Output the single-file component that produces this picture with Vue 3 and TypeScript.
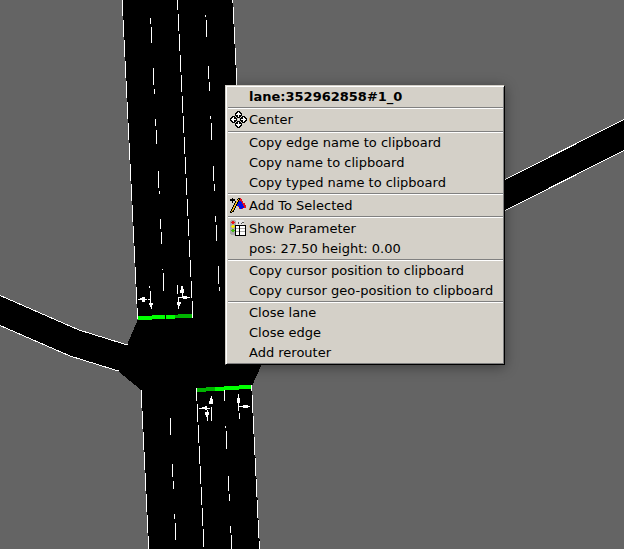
<script setup lang="ts">
type Dash = [x: number, y: number, length: number]
type IconName = 'center' | 'select' | 'parameter'
interface Item { label: string; icon?: IconName }

// A near-vertical marking drifts one pixel to the right with every dash.
function edge(x: number, y: number, period: number, count: number, length: number): Dash[] {
  return Array.from({ length: count }, (_, i): Dash => [x + i, Math.round(y + i * period), length])
}

const markings: Dash[] = [
  ...edge(122, -1, 20.6, 15, 17),
  [137, 308, 11],
  ...edge(177, -7, 20.55, 16, 17),
  ...edge(232, -14, 20.5, 6, 17),
  ...edge(141, 390, 20.8, 8, 18),
  [196, 388, 13],
  ...edge(197, 404, 20.8, 7, 18),
  [251, 385, 6],
  ...edge(252, 395, 20.9, 8, 18),
  [150, 18, 6], [151, 27, 16], [153, 68, 17], [154, 89, 5], [155, 119, 7], [156, 130, 14],
  [158, 171, 17], [159, 191, 3], [160, 219, 10], [161, 232, 12], [162, 269, 1], [163, 273, 18],
  [205, 15, 2], [206, 20, 17], [208, 66, 13], [209, 82, 9], [210, 116, 3], [211, 123, 17],
  [213, 166, 15], [214, 184, 7], [215, 216, 6], [216, 225, 16], [218, 266, 18], [219, 287, 4],
  [170, 418, 17], [172, 464, 13], [173, 481, 8], [174, 514, 5], [175, 523, 17],
  [224, 389, 12], [225, 426, 2], [226, 431, 18], [228, 476, 15], [229, 494, 7],
  [230, 526, 7], [231, 535, 14], [239, 413, 6], [211, 407, 14],
]

const title = 'lane:352962858#1_0'
const groups: Item[][] = [
  [{ label: 'Center', icon: 'center' }],
  [
    { label: 'Copy edge name to clipboard' },
    { label: 'Copy name to clipboard' },
    { label: 'Copy typed name to clipboard' },
  ],
  [{ label: 'Add To Selected', icon: 'select' }],
  [{ label: 'Show Parameter', icon: 'parameter' }, { label: 'pos: 27.50 height: 0.00' }],
  [
    { label: 'Copy cursor position to clipboard' },
    { label: 'Copy cursor geo-position to clipboard' },
  ],
  [{ label: 'Close lane' }, { label: 'Close edge' }, { label: 'Add rerouter' }],
]
</script>

<template>
  <main class="view">
    <svg class="network" viewBox="0 0 624 549" preserveAspectRatio="xMinYMin slice" shape-rendering="crispEdges" aria-hidden="true">
      <path class="asphalt" d="M122 0H233L238 120L400 230L505 180L624 119V151L505 211L300 300L262 364L252 386L260 549H149L141 390L118 371L70 356L0 325V295L79 330L127 345L138 319Z" />
      <path class="border" d="M0 295.500L79 330L127.500 345M0 325.500L70 356L118.500 371M505 179.500L624 119.500M505 210.500L624 150.500" />

      <rect v-for="([x, y, length], i) in markings" :key="i" class="mark" :x="x" :y="y" width="1" :height="length" />

      <g class="go">
        <path d="M138 316H152V315H165V319H152V320H138ZM166 315H175V319H166ZM215 387H224V386H239V385H251V389H239V390H224V391H215Z" />
      </g>
      <g class="yield">
        <path d="M175 315H178V314H192V318H175ZM197 388H206V387H215V391H206V392H197Z" />
      </g>

      <g class="mark">
        <path d="M138 299H140V298H142V297H145V302H142V300H138ZM144 299H147V300H144ZM148 299H150V300H148ZM150 291H151V304H150ZM149 286H150V288H149ZM149 303H153V305H152V309H151V307H150V305H149Z" />
        <path d="M177 285H178V294H177ZM181 286H183V289H184V293H180V290H181ZM182 292H183V298H182ZM178 297H190V298H178ZM183 296H187V299H183ZM178 297H179V303H178ZM177 302H181V304H180V306H179V309H178V305H177Z" />
        <path d="M211 396H212V399H213V404H209V401H210V398H211ZM199 408H210V409H199ZM202 407H205V406H207V410H205V409H202ZM207 410H208V421H207ZM205 412H209V415H208V417H206V415H205Z" />
        <path d="M238 394H239V398H240V403H237V398H238ZM238 402H239V411H238ZM238 406H250V407H238ZM243 405H248V408H243Z" />
      </g>
    </svg>

    <section class="menu" :aria-label="title">
      <h1 class="title">{{ title }}</h1>
      <div v-for="(group, g) in groups" :key="g" class="group">
        <button v-for="item in group" :key="item.label" class="item" type="button">
          <span class="slot">
            <svg v-if="item.icon === 'center'" width="17" height="17" viewBox="0 0 17 17" shape-rendering="crispEdges" aria-hidden="true">
              <g v-for="turn in [0, 90, 180, 270]" :key="turn" :transform="`rotate(${turn} 8.5 8.5)`">
                <path d="M7 0H10V1H11V2H12V5H11V6H10V7H7V6H6V5H5V2H6V1H7Z" />
                <path fill="#fff" d="M8 1H9V2H10V3H11V4H9V6H8V4H6V3H7V2H8Z" />
              </g>
              <path fill="#fff" d="M8 8H9V9H8Z" />
            </svg>
            <svg v-else-if="item.icon === 'select'" width="16" height="16" viewBox="0 0 16 16" shape-rendering="crispEdges" aria-hidden="true">
              <path fill="#e01020" d="M9 1H11V2H12V4H13V6H15V8H16V11H13V12H9V10H8V2H9Z" />
              <path fill="#0010e8" d="M8 4H11V5H12V7H13V9H14V11H12V12H10V11H9V9H7V6H8Z" />
              <path d="M2 1H3V2H5V4H3V6H2V4H0V2H2Z" />
              <path d="M8 1H10V3H9V5H8V7H7V9H6V11H5V13H4V15H2V16H0V14H1V12H2V10H3V8H4V6H5V4H7V2H8Z" />
              <path fill="#f4b820" d="M8 2H9V3H8V5H7V7H6V9H5V11H4V13H3V14H2V15H1V14H2V12H3V10H4V8H5V6H6V4H7V3H8Z" />
            </svg>
            <svg v-else-if="item.icon === 'parameter'" width="16" height="16" viewBox="0 0 16 16" shape-rendering="crispEdges" aria-hidden="true">
              <path fill="#aaa" d="M1 0H5V1H6V14H5V15H1V14H0V1H1Z" />
              <path fill="#e4e4e4" d="M6 0H14V5H6Z" />
              <path fill="#555" d="M8 2H9V4H8ZM11 3H12V2H14V3H12V4H11Z" />
              <path fill="#e41818" d="M2 1H4V2H5V3H4V4H2V3H1V2H2Z" />
              <path fill="#f3e600" d="M2 5H4V6H5V7H4V8H2V7H1V6H2Z" />
              <path fill="#45bd10" d="M2 9H4V10H5V11H4V12H2V11H1V10H2Z" />
              <path d="M5 5H16V16H5Z" />
              <path fill="#fff" d="M6 6H9V15H6ZM10 6H15V15H10Z" />
              <path fill="#aaa" d="M6 8H9V9H6ZM10 8H15V9H10ZM6 11H9V12H6ZM10 11H15V12H10Z" />
            </svg>
          </span>
          <span>{{ item.label }}</span>
        </button>
      </div>
    </section>
  </main>
</template>

<style>
body {
  margin: 0;
  background: #646464;
}
</style>

<style scoped>
.view {
  position: relative;
  min-height: 100vh;
  overflow: hidden;
  background: #646464;
  font: 13px/15px "DejaVu Sans", sans-serif;
  color: #000;
}

.network {
  display: block;
  width: 100%;
  height: 100vh;
}

.asphalt { fill: #000; }
.border { fill: none; stroke: #fff; }
.mark { fill: #fff; }
.go { fill: #00ff00; }
.yield { fill: #00b300; }

.menu {
  position: absolute;
  top: 85px;
  left: 225px;
  box-sizing: border-box;
  width: 280px;
  padding: 1px;
  border: 1px solid;
  border-color: #d4d0c8 #000 #000 #d4d0c8;
  background: #d4d0c8;
  box-shadow: inset 1px 1px #fff, inset -1px -1px #808080, 0 2px 12px rgba(0, 0, 0, 0.4);
}

.title {
  margin: 0;
  padding: 2px 0 3px 22px;
  font: inherit;
  font-weight: bold;
}

.group::before {
  content: "";
  display: block;
  height: 1px;
  margin-left: 1px;
  border-bottom: 1px solid #fff;
  background: #808080;
}

.item {
  display: flex;
  align-items: center;
  width: 100%;
  margin: 0;
  padding: 2px 0 3px 3px;
  border: 0;
  background: none;
  color: inherit;
  font: inherit;
  text-align: left;
  white-space: nowrap;
}

.item:focus-visible {
  outline: 1px dotted #000;
  outline-offset: -1px;
}

.slot {
  flex: 0 0 19px;
}

.slot svg {
  display: block;
}
</style>
